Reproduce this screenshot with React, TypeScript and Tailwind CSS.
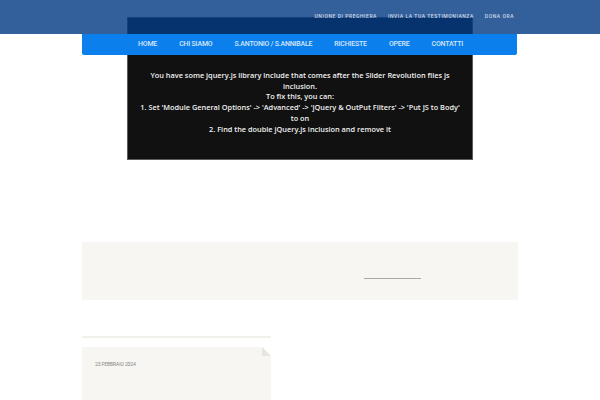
import React from "react";

const topLinks = ["UNIONE DI PREGHIERA", "INVIA LA TUA TESTIMONIANZA", "DONA ORA"];
const navItems = ["HOME", "CHI SIAMO", "S.ANTONIO / S.ANNIBALE", "RICHIESTE", "OPERE", "CONTATTI"];

const errorLines = [
  "You have some jquery.js library include that comes after the Slider Revolution files js",
  "inclusion.",
  "To fix this, you can:",
  "1. Set 'Module General Options' -> 'Advanced' -> 'jQuery & OutPut Filters' -> 'Put JS to Body'",
  "to on",
  "2. Find the double jQuery.js inclusion and remove it",
];

function Header() {
  return (
    <header className="absolute inset-x-0 top-0 z-10">
      <div className="flex h-[34px] items-center justify-end bg-[rgba(4,59,132,0.81)] pr-[86px]">
        <ul className="flex items-center gap-[11px] pb-[1px] font-['Roboto',sans-serif] text-[5px] font-medium tracking-[0.55px] text-[#cfd9e8]">
          {topLinks.map((l) => (
            <li key={l} className="whitespace-nowrap">
              {l}
            </li>
          ))}
        </ul>
      </div>
      <nav className="ml-[82px] flex h-[21px] w-[435px] items-center rounded-b-[2px] bg-[#0b80ec]">
        <ul className="ml-[56px] flex w-[325px] items-center justify-between font-['Roboto',sans-serif] text-[7px] font-medium tracking-[-0.2px] text-[#d6e7fb]">
          {navItems.map((n) => (
            <li key={n} className="whitespace-nowrap">
              {n}
            </li>
          ))}
        </ul>
      </nav>
    </header>
  );
}

function FoldedCorner() {
  return (
    <svg className="absolute right-0 top-0" width="9" height="9" viewBox="0 0 9 9">
      <polygon points="0,0 9,0 9,9" fill="#ffffff" />
      <polygon points="0,0 9,9 0,9" fill="#e6e5e0" />
    </svg>
  );
}

export default function App() {
  return (
    <div className="relative h-[400px] w-full overflow-hidden bg-white font-['Open_Sans',sans-serif]">
      <Header />

      <main className="flex flex-col pt-[17px]">
        <section className="mx-auto h-[143px] w-[346px] border border-[#5c5c5c] bg-[#111111] pt-[52px] text-center text-[7.35px] font-semibold leading-[10.7px] text-[#f2f2f2]">
          {errorLines.map((line) => (
            <div key={line} className="whitespace-nowrap">
              {line}
            </div>
          ))}
        </section>

        <section className="mx-[82px] mt-[82px] flex h-[58px] items-center bg-[#f7f6f2]">
          <div className="ml-[282px] mt-[14px] h-px w-[57px] bg-[#a9a9a7]" />
        </section>

        <div className="ml-[82px] mt-[36px] h-[2px] w-[189px] bg-[#f1f0eb]" />

        <article className="relative ml-[82px] mt-[9px] h-[60px] w-[189px] bg-[#f7f6f2] px-[13px] pt-[14px]">
          <FoldedCorner />
          <p className="font-['Roboto',sans-serif] text-[5px] tracking-[-0.1px] text-[#858585]">23 FEBBRAIO 2024</p>
        </article>
      </main>
    </div>
  );
}
